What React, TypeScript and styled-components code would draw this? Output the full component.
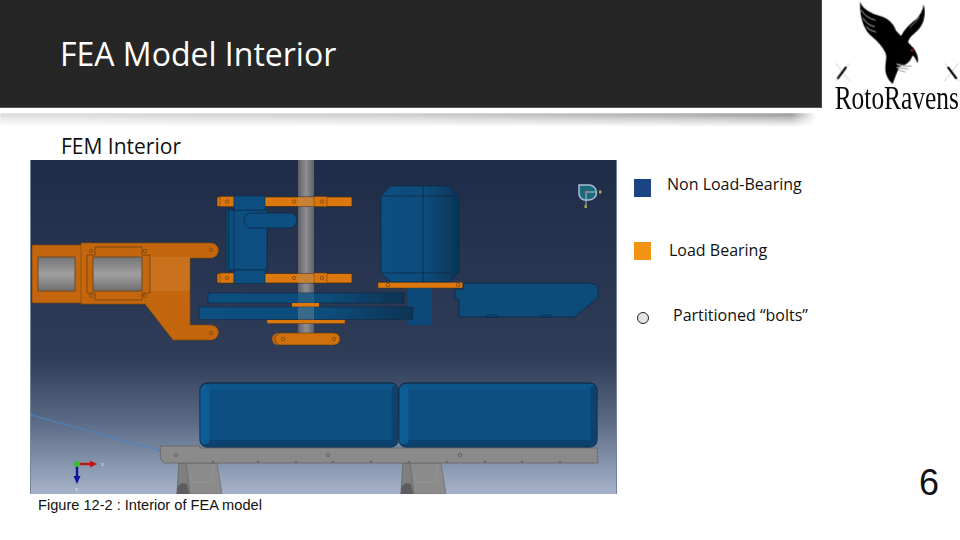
import React from "react";
import styled, { createGlobalStyle } from "styled-components";

const Global = createGlobalStyle`
  html, body { margin: 0; padding: 0; background: #fff; }
  body { font-family: "Open Sans", "Liberation Sans", sans-serif; color: #111; }
`;

const Slide = styled.div`
  width: 960px;
  height: 540px;
  overflow: hidden;
  display: flex;
  flex-direction: column;
  background: #fff;
`;

const Header = styled.header`
  display: flex;
  align-items: flex-start;
  height: 113px;
`;

const TitleBar = styled.div`
  width: 822px;
  height: 108px;
  box-sizing: border-box;
  padding-left: 60px;
  display: flex;
  align-items: center;
  background: #262626;
  border-bottom: 1px solid #555;
  border-right: 1px solid #444;
`;

const Title = styled.h1`
  margin: 0;
  font-family: "Open Sans", sans-serif;
  font-weight: 400;
  font-size: 32px;
  line-height: 40px;
  color: #fff;
`;

const LogoBox = styled.div`
  margin-left: 8px;
  width: 130px;
  height: 113px;
  flex: none;
`;

const Shadow = styled.div`
  width: 816px;
  height: 14px;
  flex: none;
  background: linear-gradient(to right, #d8d8d8 0%, #c4c4c4 50%, #a0a0a0 85%, #8c8c8c 97%, #fff 100%);
  mask-image: linear-gradient(to bottom, #000 0%, #0008 40%, transparent 100%);
  filter: blur(1px);
`;

const Content = styled.main`
  display: flex;
  flex: 1;
  padding-left: 30px;
`;

const FigureColumn = styled.section`
  width: 587px;
  flex: none;
  display: flex;
  flex-direction: column;
`;

const SubHeading = styled.h2`
  margin: 0;
  height: 33px;
  box-sizing: border-box;
  padding: 6px 0 0 31px;
  font-family: "Open Sans", sans-serif;
  font-weight: 400;
  font-size: 21px;
  line-height: 27px;
  color: #111;
`;

const ModelFrame = styled.div`
  width: 587px;
  height: 334px;
  background: linear-gradient(to bottom, #1e2c48 0%, #2f3d59 60%, #5a6984 78%, #a6b3ca 100%);
  box-shadow: inset 1px 0 0 #76839a, inset -1px 0 0 #76839a;
`;

const ModelSvg = styled.svg`
  display: block;
  width: 587px;
  height: 334px;
`;

const Caption = styled.p`
  margin: 2px 0 0 8px;
  font-family: "Liberation Sans", sans-serif;
  font-size: 14.6px;
  line-height: 18px;
  color: #111;
`;

const LegendColumn = styled.aside`
  flex: 1;
  display: flex;
  flex-direction: column;
  padding-left: 17px;
  padding-top: 46px;
`;

const LegendRow = styled.div<{ $gap: number; $top: number }>`
  display: flex;
  align-items: center;
  height: 22px;
  gap: ${(p) => p.$gap}px;
  margin-top: ${(p) => p.$top}px;
`;

const Swatch = styled.span<{ $color: string; $shift: number }>`
  width: 17px;
  height: 18px;
  flex: none;
  background: ${(p) => p.$color};
  position: relative;
  top: ${(p) => p.$shift}px;
`;

const BoltDot = styled.span`
  width: 10px;
  height: 10px;
  margin-left: 3px;
  flex: none;
  border: 1px solid #222;
  border-radius: 50%;
  background: #e4e4e4;
  position: relative;
  top: 3px;
`;

const LegendText = styled.span`
  font-family: "Open Sans", sans-serif;
  font-size: 16px;
  line-height: 22px;
  color: #111;
`;

const PageNumber = styled.div`
  margin-top: auto;
  align-self: flex-end;
  margin-bottom: 38px;
  padding-right: 21px;
  font-family: "Liberation Sans", sans-serif;
  font-size: 36px;
  line-height: 38px;
  color: #111;
`;

const ORANGE = "#c4660a";
const BRIGHT = "#dc7810";
const BLUE = "#0b4f80";
const EDGE = "#0e2a45";

const Bolt = ({ x, y }: { x: number; y: number }) => (
  <circle cx={x} cy={y} r={1.7} fill="none" stroke="#7a4708" strokeWidth={0.8} />
);

const Arm = ({ y }: { y: number }) => (
  <g>
    <rect x={217} y={y} width={135} height={9.5} fill={BRIGHT} stroke="#3a2a14" strokeWidth={0.7} />
    <rect x={220} y={y - 0.5} width={14} height={10} fill="#d87510" stroke="#5a3a10" strokeWidth={0.5} />
    <rect x={298} y={y} width={16} height={9.5} fill="#b98a52" opacity={0.55} />
    <rect x={314} y={y - 0.5} width={13} height={10} fill="#d87510" stroke="#5a3a10" strokeWidth={0.5} />
    <Bolt x={227} y={y + 4.5} />
    <Bolt x={294} y={y + 4.5} />
    <Bolt x={322} y={y + 4.5} />
  </g>
);

const Battery = ({ x, w }: { x: number; w: number }) => (
  <g>
    <rect x={x} y={383} width={w} height={64} rx={7} fill={BLUE} stroke="#08233c" strokeWidth={1} />
    <rect x={x + 4} y={384} width={w - 8} height={6} fill="#0c568a" />
    <rect x={x + 4} y={440} width={w - 8} height={6.5} fill="#0a426e" />
    <rect x={x + 0.5} y={386} width={9} height={58} rx={4} fill="#0e5c93" />
    <rect x={x + w - 6.5} y={386} width={6} height={58} rx={3} fill="#0a426e" />
  </g>
);

const Pillar = ({ x }: { x: number }) => (
  <g>
    <polygon points={`${x + 2},463 ${x + 40},463 ${x + 45},494 ${x},494`} fill="#8b8b8b" stroke="#6f6f6f" strokeWidth={0.7} />
    <polygon points={`${x + 2},463 ${x + 9},463 ${x + 13},494 ${x},494`} fill="#7f7f80" stroke="#666" strokeWidth={0.7} />
    <polygon points={`${x + 1},486 ${x + 5},483 ${x + 10},484 ${x + 12},494 ${x},494`} fill="#5d5d60" />
    <polyline points={`${x + 13},482 ${x + 34},482 ${x + 37},465`} fill="none" stroke="#9a9a9a" strokeWidth={0.6} />
  </g>
);

const FemModel = () => (
  <ModelSvg viewBox="30 160 587 334">
    <defs>
      <linearGradient id="shaft" x1="0" x2="1" y1="0" y2="0">
        <stop offset="0" stopColor="#5d6069" />
        <stop offset="0.5" stopColor="#8f8f92" />
        <stop offset="1" stopColor="#5d6069" />
      </linearGradient>
      <linearGradient id="win" x1="0" x2="0" y1="0" y2="1">
        <stop offset="0" stopColor="#747476" />
        <stop offset="0.5" stopColor="#a0a0a1" />
        <stop offset="1" stopColor="#6e6e70" />
      </linearGradient>
      <linearGradient id="can" x1="0" x2="1" y1="0" y2="0">
        <stop offset="0" stopColor="#0b4f80" />
        <stop offset="0.55" stopColor="#0a4d7c" />
        <stop offset="1" stopColor="#063558" />
      </linearGradient>
      <linearGradient id="plate" x1="0" x2="1" y1="0" y2="0">
        <stop offset="0" stopColor="#0b4f80" />
        <stop offset="0.6" stopColor="#0b4d7b" />
        <stop offset="1" stopColor="#0a3353" />
      </linearGradient>
      <filter id="soft" x="-2%" y="-2%" width="104%" height="104%">
        <feGaussianBlur stdDeviation="0.45" />
      </filter>
    </defs>
    <g filter="url(#soft)">
      {/* guide line to the rail */}
      <line x1={31} y1={415} x2={176} y2={455} stroke="#4a86c4" strokeWidth={1.6} strokeDasharray="2 1" />

      {/* arm plate */}
      <rect x={32} y={245} width={50} height={58} fill={ORANGE} stroke="#7a4308" strokeWidth={0.7} />
      <rect x={38} y={257} width={37} height={34} fill="url(#win)" stroke="#6e4a22" strokeWidth={1} />
      <path
        d="M81 243 H211 A7.5 7.5 0 0 1 211 258 H190 V325 H211 A7.5 7.5 0 0 1 211 340 H173 L145 304 H81 Z"
        fill={ORANGE}
        stroke="#80470a"
        strokeWidth={0.7}
      />
      <rect x={150} y={257} width={40} height={34} fill="#e0a060" opacity={0.2} />
      <path
        d="M95 247 H142 V255 H150 V293 H142 V300 H95 V293 H87 V255 H95 Z"
        fill="none"
        stroke="#80470a"
        strokeWidth={1}
      />
      <rect x={93} y={257} width={49} height={34} fill="url(#win)" stroke="#6e4a22" strokeWidth={1} />
      <Bolt x={91} y={251} />
      <Bolt x={145} y={251} />
      <Bolt x={91} y={296} />
      <Bolt x={145} y={296} />
      <Bolt x={211} y={250} />
      <Bolt x={211} y={333} />

      {/* shaft */}
      <rect x={298} y={160} width={16} height={176} fill="url(#shaft)" />

      {/* servo */}
      <Arm y={197} />
      <Arm y={273.5} />
      <rect x={226} y={209} width={6} height={62} rx={1} fill="#0a4570" stroke={EDGE} strokeWidth={0.6} />
      <rect x={229} y={210} width={38} height={60} fill={BLUE} stroke={EDGE} strokeWidth={0.8} />
      <line x1={234} y1={210} x2={234} y2={270} stroke={EDGE} strokeWidth={0.7} />
      <rect x={234} y={196} width={31} height={14} fill={BLUE} stroke={EDGE} strokeWidth={0.6} />
      <rect x={234} y={270} width={31} height={13.5} fill={BLUE} stroke={EDGE} strokeWidth={0.6} />
      <rect x={244} y={213} width={53} height={15} rx={7.5} fill={BLUE} stroke={EDGE} strokeWidth={0.9} />

      {/* pulley plates */}
      <rect x={208} y={293} width={196} height={10} fill="url(#plate)" stroke={EDGE} strokeWidth={0.7} />
      <rect x={292} y={303} width={27} height={4} fill={BRIGHT} />
      <rect x={267} y={319.5} width={78} height={4} fill={BRIGHT} stroke="#5a3a10" strokeWidth={0.5} />
      <rect x={408} y={288} width={24} height={37} fill="#0a4a78" />
      <rect x={199} y={307} width={214} height={12.5} fill="url(#plate)" stroke={EDGE} strokeWidth={0.6} />
      <rect x={298} y={307} width={16} height={12.5} fill="#8f9aa5" opacity={0.35} />
      <rect x={298} y={293} width={16} height={10} fill="#8f9aa5" opacity={0.2} />

      {/* link */}
      <circle cx={278} cy={339} r={6} fill="#b8650e" />
      <rect x={275} y={333} width={65} height={12} rx={6} fill="#cf700e" stroke="#5a3a10" strokeWidth={0.6} />
      <Bolt x={283} y={339} />
      <Bolt x={334} y={339} />

      {/* motor */}
      <path d="M391 186 H449 L459 196 V273 L449 282 H391 L381 273 V196 Z" fill="url(#can)" stroke={EDGE} strokeWidth={0.7} />
      <line x1={381} y1={196} x2={459} y2={196} stroke={EDGE} strokeWidth={0.8} />
      <line x1={381} y1={273} x2={459} y2={273} stroke={EDGE} strokeWidth={0.8} />
      <line x1={423} y1={186} x2={423} y2={282} stroke={EDGE} strokeWidth={0.8} />
      <rect x={378} y={282.5} width={85} height={5.5} fill={BRIGHT} stroke="#5a3a10" strokeWidth={0.5} />
      <Bolt x={388} y={285} />
      <Bolt x={458} y={285} />

      {/* electronics box */}
      <polygon
        points="463,283 587,283 598,285 598,298 574,317 459,317 459,299 455,299 455,289 463,289"
        fill="#0b4b79"
        stroke={EDGE}
        strokeWidth={0.8}
      />
      <rect x={487} y={315} width={10} height={2.5} fill="none" stroke={EDGE} strokeWidth={0.6} />
      <rect x={541} y={315} width={10} height={2.5} fill="none" stroke={EDGE} strokeWidth={0.6} />

      {/* batteries and rail */}
      <Pillar x={177} />
      <Pillar x={401} />
      <polygon points="160,446 200,446 200,448 597,448 598,463 164,463 161,460" fill="#8a8a8a" stroke="#606060" strokeWidth={0.7} />
      <Battery x={200} w={198} />
      <Battery x={399} w={198} />
      {[176, 328, 460].map((x) => (
        <circle key={x} cx={x} cy={455} r={1.6} fill="none" stroke="#555" strokeWidth={0.7} />
      ))}
      {[213, 258, 296, 333, 371, 409, 447, 485, 522, 560].map((x) => (
        <circle key={x} cx={x} cy={462} r={1.3} fill="#6b6b6b" />
      ))}

      {/* view cube triad */}
      <path d="M579 185 H589 A7.5 7.5 0 0 1 589 200 H584 Q579 198 579 193 Z" fill="#1e6b78" stroke="#a8bcd8" strokeWidth={1.5} />
      <line x1={586} y1={192} x2={597} y2={192} stroke="#a8bcd8" strokeWidth={1} />
      <line x1={586} y1={192} x2={586} y2={205} stroke="#a8bcd8" strokeWidth={1} />
      <rect x={585} y={191} width={2} height={2} fill="#e06060" />
      <rect x={599} y={190.5} width={2.4} height={3} fill="#a9a94a" />
      <rect x={584.5} y={205} width={2.4} height={3} fill="#a9a94a" />

      {/* axes */}
      <line x1={77} y1={464} x2={92} y2={464} stroke="#c01818" strokeWidth={2.4} />
      <polygon points="90,460.5 97,464 90,467.5" fill="#c01818" />
      <line x1={77} y1={464} x2={77} y2={478} stroke="#10189a" strokeWidth={2.4} />
      <polygon points="73.5,476 80.5,476 77,484" fill="#10189a" />
      <circle cx={77} cy={464} r={3} fill="#38c030" />
      <text x={101} y={466} fontFamily="Liberation Sans, sans-serif" fontSize={6} fill="#d8dee8">x</text>
      <text x={75} y={491} fontFamily="Liberation Sans, sans-serif" fontSize={6} fill="#d8dee8">z</text>
    </g>
  </ModelSvg>
);

const Cross = ({ flip }: { flip?: boolean }) => (
  <g transform={flip ? "translate(402 0) scale(-1 1)" : undefined}>
    <line x1={17} y1={190} x2={58} y2={243} stroke="#b5b5b5" strokeWidth={2} />
    <line x1={58} y1={190} x2={15} y2={243} stroke="#b5b5b5" strokeWidth={2} />
    <line x1={47} y1={203} x2={24} y2={234} stroke="#111" strokeWidth={7} strokeLinecap="round" />
  </g>
);

const Logo = () => (
  <svg viewBox="0 0 390 345" width="130" height="115" style={{ display: "block" }}>
    <defs>
      <filter id="logosoft">
        <feGaussianBlur stdDeviation="0.9" />
      </filter>
    </defs>
    <g filter="url(#logosoft)">
      <path
        d="M90 5 C100 30 125 40 150 48 C175 55 190 70 198 92 L213 108 C222 90 240 70 258 58 C270 46 278 30 281 13 C288 40 284 70 262 92 C248 105 238 112 234 126 C242 138 252 142 257 155 C263 165 266 178 263 190 C258 180 254 170 248 166 C244 178 236 188 226 194 L208 200 L198 225 L188 252 C175 240 166 225 166 205 C166 185 172 172 166 158 C158 140 144 125 126 110 C106 95 88 60 90 5 Z"
        fill="#060606"
      />
      <path d="M93 30 C106 48 118 56 136 60 M98 54 C108 68 118 76 134 80 M108 80 C116 88 124 92 138 96" stroke="#fff" strokeWidth={2} fill="none" />
      <path d="M268 50 C258 64 250 72 240 82" stroke="#fff" strokeWidth={1.5} fill="none" />
      <path d="M200 192 L222 198 L245 198 M200 202 L235 207 M206 210 L226 216" stroke="#fff" strokeWidth={4} fill="none" />
      <path d="M200 192 L222 198 L245 198 M200 202 L235 207 M206 210 L226 216" stroke="#222" strokeWidth={1.4} fill="none" />
      <circle cx={246} cy={151} r={3.5} fill="#d00d0d" />
      <Cross />
      <Cross flip />
    </g>
    <text
      x={14}
      y={248}
      transform="scale(1 1.32)"
      fontFamily="Liberation Serif, serif"
      fontSize={76}
      textLength={373}
      lengthAdjust="spacingAndGlyphs"
      fill="#0a0a0a"
    >
      RotoRavens
    </text>
  </svg>
);

export default function App() {
  return (
    <Slide>
      <Global />
      <Header>
        <TitleBar>
          <Title>FEA Model Interior</Title>
        </TitleBar>
        <LogoBox>
          <Logo />
        </LogoBox>
      </Header>
      <Shadow />
      <Content>
        <FigureColumn>
          <SubHeading>FEM Interior</SubHeading>
          <ModelFrame>
            <FemModel />
          </ModelFrame>
          <Caption>Figure 12-2 : Interior of FEA model</Caption>
        </FigureColumn>
        <LegendColumn>
          <LegendRow $gap={16} $top={0}>
            <Swatch $color="#1c4587" $shift={4} />
            <LegendText>Non Load-Bearing</LegendText>
          </LegendRow>
          <LegendRow $gap={18} $top={44}>
            <Swatch $color="#f39314" $shift={1} />
            <LegendText>Load Bearing</LegendText>
          </LegendRow>
          <LegendRow $gap={24} $top={43}>
            <BoltDot />
            <LegendText>Partitioned “bolts”</LegendText>
          </LegendRow>
          <PageNumber>6</PageNumber>
        </LegendColumn>
      </Content>
    </Slide>
  );
}
